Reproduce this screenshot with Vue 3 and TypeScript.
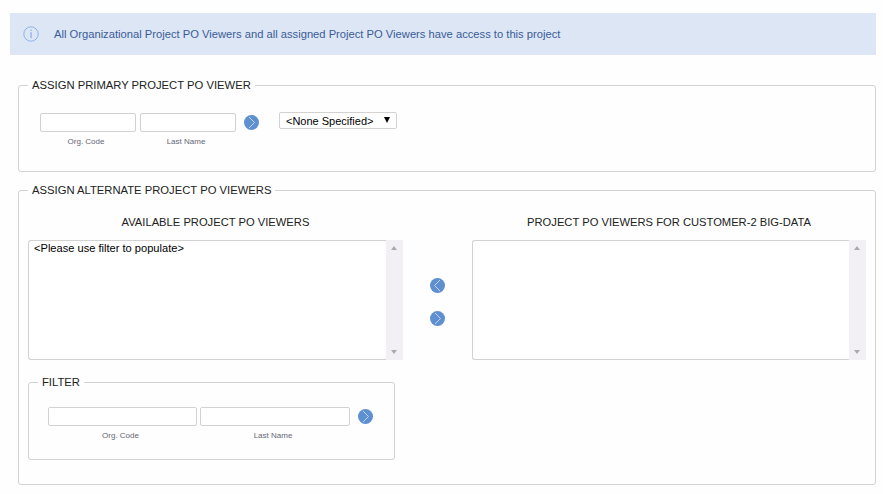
<template>
  <div class="page">
    <div class="alert">
      <svg class="info" width="16" height="16" viewBox="0 0 16 16" fill="none">
        <circle cx="8" cy="8" r="7.2" stroke="#8fb2e6" stroke-width="1" />
        <rect x="7.4" y="3.6" width="1.3" height="1.4" fill="#8fb2e6" />
        <rect x="7.4" y="6.2" width="1.3" height="6" fill="#8fb2e6" />
      </svg>
      <span>All Organizational Project PO Viewers and all assigned Project PO Viewers have access to this project</span>
    </div>

    <fieldset class="group primary">
      <legend>ASSIGN PRIMARY PROJECT PO VIEWER</legend>
      <div class="primary-row">
        <div class="field">
          <input class="text-input" type="text" />
          <label>Org. Code</label>
        </div>
        <div class="field">
          <input class="text-input" type="text" />
          <label>Last Name</label>
        </div>
        <button class="round-btn go" type="button" aria-label="Search">
          <svg width="15" height="15" viewBox="0 0 15 15"><path :d="chevronRight" /></svg>
        </button>
        <div class="select-box">
          <span>&lt;None Specified&gt;</span>
          <i class="caret"></i>
        </div>
      </div>
    </fieldset>

    <fieldset class="group alternate">
      <legend>ASSIGN ALTERNATE PROJECT PO VIEWERS</legend>
      <div class="columns">
        <div class="col">
          <h4>AVAILABLE PROJECT PO VIEWERS</h4>
          <div class="listbox">
            <div class="list-body">&lt;Please use filter to populate&gt;</div>
            <div class="rail"><i class="up"></i><i class="down"></i></div>
          </div>
        </div>
        <div class="move">
          <button class="round-btn" type="button" aria-label="Remove">
            <svg width="15" height="15" viewBox="0 0 15 15"><path :d="chevronLeft" /></svg>
          </button>
          <button class="round-btn" type="button" aria-label="Add">
            <svg width="15" height="15" viewBox="0 0 15 15"><path :d="chevronRight" /></svg>
          </button>
        </div>
        <div class="col right">
          <h4>PROJECT PO VIEWERS FOR CUSTOMER-2 BIG-DATA</h4>
          <div class="listbox">
            <div class="list-body"></div>
            <div class="rail"><i class="up"></i><i class="down"></i></div>
          </div>
        </div>
      </div>

      <fieldset class="group filter">
        <legend>FILTER</legend>
        <div class="filter-row">
          <div class="field wide">
            <input class="text-input" type="text" />
            <label>Org. Code</label>
          </div>
          <div class="field wide">
            <input class="text-input" type="text" />
            <label>Last Name</label>
          </div>
          <button class="round-btn go" type="button" aria-label="Filter">
            <svg width="15" height="15" viewBox="0 0 15 15"><path :d="chevronRight" /></svg>
          </button>
        </div>
      </fieldset>
    </fieldset>
  </div>
</template>

<script setup lang="ts">
const chevronRight = "M5 2 L10.5 7.5 L5 13";
const chevronLeft = "M10 2 L4.5 7.5 L10 13";
</script>

<style>
html,
body {
  background: #fdfefd;
}
</style>

<style scoped>
.page {
  box-sizing: border-box;
  width: 883px;
  height: 494px;
  padding: 13px 7px 0 10px;
  overflow: hidden;
  font-family: "Liberation Sans", Arial, sans-serif;
  color: #222;
}

.alert {
  display: flex;
  align-items: center;
  height: 42px;
  padding-left: 13px;
  background: #dde6f5;
  color: #3a5c96;
  font-size: 11.2px;
}

.info {
  margin-right: 15px;
}

.group {
  margin: 0;
  padding: 0;
  border: 1px solid #d2d2d0;
  border-radius: 3px;
  min-width: 0;
}

.group legend {
  margin-left: 9px;
  padding: 0 4px;
  font-size: 11.25px;
  line-height: 14px;
  color: #222;
}

.primary {
  margin: 23px 0 0 8px;
  height: 94px;
  box-sizing: border-box;
}

.primary-row {
  display: flex;
  align-items: flex-start;
  padding: 21px 0 0 21px;
}

.field {
  display: flex;
  flex-direction: column;
  align-items: center;
  width: 96px;
  margin-right: 4px;
}

.field label {
  margin-top: 5px;
  padding-right: 4px;
  font-size: 8px;
  line-height: 10px;
  color: #667;
}

.text-input {
  box-sizing: border-box;
  width: 100%;
  height: 19px;
  padding: 0 4px;
  background: #fff;
  border: 1px solid #d2d2d0;
  border-radius: 2px;
}

.round-btn {
  display: block;
  width: 15px;
  height: 15px;
  padding: 0;
  border: 0;
  border-radius: 50%;
  background: #5e8fd0;
}

.round-btn svg {
  display: block;
}

.round-btn path {
  fill: none;
  stroke: #c3d4ee;
  stroke-width: 1;
}

.go {
  margin: 2px 0 0 4px;
}

.select-box {
  position: relative;
  box-sizing: border-box;
  width: 118px;
  height: 17px;
  margin: -1px 0 0 20px;
  padding-left: 6px;
  background: #fff;
  border: 1px solid #d2d2d0;
  border-radius: 2px;
  font-size: 11px;
  line-height: 16px;
  color: #000;
}

.caret {
  position: absolute;
  top: 4px;
  right: 6px;
  border-left: 3.5px solid transparent;
  border-right: 3.5px solid transparent;
  border-top: 6px solid #000;
}

.alternate {
  margin: 11px 0 0 8px;
  height: 302px;
  box-sizing: border-box;
}

.columns {
  display: flex;
  padding: 0 9px;
}

.col {
  width: 375px;
  flex: none;
}

.col.right {
  width: 394px;
}

.col h4 {
  margin: 18px 0 11px;
  font-size: 11.2px;
  font-weight: 400;
  line-height: 14px;
  text-align: center;
  color: #222;
}

.listbox {
  display: flex;
  box-sizing: border-box;
  height: 120px;
  background: #fff;
  border: 1px solid #d2d2d0;
  border-right: 0;
  border-radius: 3px 0 0 3px;
}

.list-body {
  flex: 1;
  padding: 1px 5px;
  font-size: 11.1px;
  line-height: 13px;
  color: #000;
}

.rail {
  position: relative;
  width: 17px;
  margin: -1px 0;
  background: #f2f0f5;
}

.rail i {
  position: absolute;
  left: 5px;
  border-left: 3.5px solid transparent;
  border-right: 3.5px solid transparent;
}

.rail .up {
  top: 6px;
  border-bottom: 4px solid #aaa;
}

.rail .down {
  bottom: 6px;
  border-top: 4px solid #aaa;
}

.move {
  display: flex;
  flex: none;
  flex-direction: column;
  align-items: center;
  gap: 18px;
  width: 69px;
  padding-top: 81px;
}

.filter {
  box-sizing: border-box;
  width: 367px;
  height: 85px;
  margin: 15px 0 0 9px;
}

.filter-row {
  display: flex;
  align-items: flex-start;
  padding: 18px 0 0 19px;
}

.filter-row .go {
  margin-left: 5px;
}

.field.wide {
  width: 149px;
  margin-right: 3px;
}

.field.wide:nth-child(2) {
  width: 150px;
}
</style>
